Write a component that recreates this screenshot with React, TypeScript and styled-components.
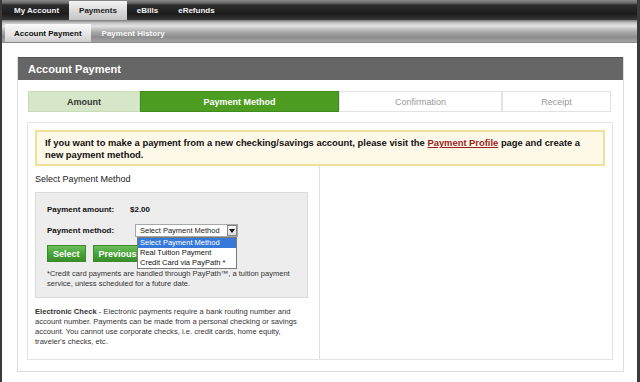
import styled, { createGlobalStyle } from "styled-components";

const GlobalStyle = createGlobalStyle`
  body {
    margin: 0;
    background: #fff;
    font-family: "Liberation Sans", Arial, sans-serif;
  }
`;

const Frame = styled.div`
  width: 640px;
  height: 382px;
  box-sizing: border-box;
  border-left: 2px solid #3a3a3a;
  border-right: 3px solid #3a3a3a;
  overflow: hidden;
  background: #fff;
`;

const TopNav = styled.nav`
  height: 20px;
  display: flex;
  align-items: flex-end;
  padding-left: 2px;
  background: linear-gradient(#8a8a8a 0, #6a6a6a 3px, #2c2c2c 5px, #1c1c1c 14px, #3a3a3a 20px);
`;

const NavTab = styled.div<{ active?: boolean }>`
  height: 19px;
  display: flex;
  align-items: center;
  padding: 0 10px;
  font-size: 8px;
  font-weight: bold;
  color: ${(p) => (p.active ? "#1a1a1a" : "#f2f2f2")};
  background: ${(p) =>
    p.active ? "linear-gradient(#f4f4f4, #d6d6d6 60%, #c4c4c4)" : "transparent"};
`;

const SubNav = styled.nav`
  height: 22px;
  display: flex;
  align-items: flex-end;
  padding-left: 3px;
  background: linear-gradient(#7a7a7a 0, #c6c6c6 3px, #e2e2e2 6px, #a8a8a8 12px, #8c8c8c 17px, #a4a4a4 22px);
  border-bottom: 1px solid #8a8a8a;
`;

const SubTab = styled.div<{ active?: boolean }>`
  height: 18px;
  display: flex;
  align-items: center;
  padding: 0 ${(p) => (p.active ? "9px" : "11px")};
  font-size: 8px;
  font-weight: bold;
  color: ${(p) => (p.active ? "#111" : "#f6f6f6")};
  background: ${(p) =>
    p.active ? "linear-gradient(#fafafa, #e4e4e4 60%, #cfcfcf)" : "transparent"};
`;

const Content = styled.main`
  padding: 14px 13px 0 15px;
`;

const Panel = styled.section`
  border: 1px solid #dcdcdc;
  border-top: none;
  height: 315px;
  box-sizing: border-box;
`;

const PanelHeader = styled.h1`
  margin: 0;
  height: 22px;
  display: flex;
  align-items: center;
  padding-left: 10px;
  background: #666;
  border-top: 1px solid #555;
  color: #fff;
  font-size: 11px;
  font-weight: bold;
`;

const Steps = styled.div`
  display: grid;
  grid-template-columns: 112px 199px 163px 109px;
  margin: 11px 0 0 10px;
  height: 21px;
`;

const Step = styled.div<{ state: "done" | "active" | "todo" }>`
  display: flex;
  align-items: center;
  justify-content: center;
  font-size: 9px;
  box-sizing: border-box;
  font-weight: ${(p) => (p.state === "todo" ? "normal" : "bold")};
  color: ${(p) => (p.state === "active" ? "#fff" : p.state === "done" ? "#333" : "#999")};
  background: ${(p) =>
    p.state === "active" ? "#4c9d22" : p.state === "done" ? "#d6e7c9" : "#fff"};
  border: 1px solid
    ${(p) => (p.state === "active" ? "#3f8c1a" : p.state === "done" ? "#c8dcb8" : "#e2e2e2")};
`;

const InnerBox = styled.div`
  margin: 10px 10px 0 9px;
  border: 1px solid #e4e4e4;
  height: 238px;
  box-sizing: border-box;
  padding: 7px 7px 0 7px;
`;

const Warning = styled.div`
  background: #fdf8e8;
  border: 2px solid #f1e09a;
  padding: 5px 8px;
  font-size: 9.4px;
  font-weight: bold;
  line-height: 12px;
  color: #111;
  height: 36px;
  box-sizing: border-box;
`;

const ProfileLink = styled.a`
  color: #9b1c1c;
  text-decoration: underline;
`;

const Columns = styled.div`
  display: grid;
  grid-template-columns: 285px 1fr;
`;

const LeftCol = styled.div`
  padding-top: 8px;
  border-right: 1px solid #dedede;
  height: 185px;
`;

const SectionLabel = styled.div`
  font-size: 9px;
  color: #222;
  height: 12px;
`;

const MethodBox = styled.div`
  margin-top: 6px;
  width: 273px;
  height: 106px;
  box-sizing: border-box;
  background: #ededed;
  border: 1px solid #dadada;
  padding: 10px 11px 0 11px;
  position: relative;
`;

const FieldRow = styled.div`
  display: grid;
  grid-template-columns: 88px 1fr;
  align-items: center;
  height: 13px;
  margin-bottom: 8px;
  font-size: 8px;
  color: #111;
`;

const FieldLabel = styled.span`
  font-weight: bold;
`;

const Value = styled.span`
  font-weight: bold;
  margin-left: -5px;
`;

const SelectWrap = styled.div`
  position: relative;
  width: 103px;
  height: 13px;
`;

const SelectBox = styled.div`
  height: 13px;
  box-sizing: border-box;
  border: 1px solid #a8a8a8;
  background: #fff;
  display: flex;
  align-items: center;
  padding-left: 4px;
  font-size: 7.5px;
  color: #222;
`;

const SelectArrow = styled.div`
  position: absolute;
  right: 1px;
  top: 1px;
  width: 10px;
  height: 11px;
  box-sizing: border-box;
  border: 1px solid #888;
  background: linear-gradient(#fafafa, #dcdcdc);
  display: flex;
  align-items: center;
  justify-content: center;
`;

const OptionList = styled.ul`
  position: absolute;
  left: 2px;
  top: 13px;
  width: 100px;
  margin: 0;
  padding: 0;
  list-style: none;
  background: #fff;
  border: 1px solid #7a7a7a;
  box-sizing: border-box;
  z-index: 2;
`;

const Option = styled.li<{ selected?: boolean }>`
  height: 10px;
  line-height: 10px;
  padding-left: 2px;
  font-size: 7.5px;
  white-space: nowrap;
  color: ${(p) => (p.selected ? "#fff" : "#111")};
  background: ${(p) => (p.selected ? "#3679d8" : "#fff")};
`;

const Buttons = styled.div`
  display: flex;
  gap: 7px;
`;

const GreenButton = styled.button`
  height: 17px;
  padding: 0 5px;
  border: 1px solid #3c8a2a;
  background: linear-gradient(#6cc05a, #45a136 55%, #3a8f2b);
  color: #fff;
  font-family: inherit;
  font-size: 9px;
  font-weight: bold;
  white-space: nowrap;
`;

const Footnote = styled.p`
  margin: 7px 0 0;
  font-size: 7.5px;
  line-height: 10px;
  color: #333;
`;

const Info = styled.p`
  margin: 9px 0 0;
  width: 264px;
  font-size: 7.6px;
  line-height: 10px;
  color: #333;
`;

export default function App() {
  return (
    <Frame>
      <GlobalStyle />
      <TopNav>
        <NavTab>My Account</NavTab>
        <NavTab active>Payments</NavTab>
        <NavTab>eBills</NavTab>
        <NavTab>eRefunds</NavTab>
      </TopNav>
      <SubNav>
        <SubTab active>Account Payment</SubTab>
        <SubTab>Payment History</SubTab>
      </SubNav>
      <Content>
        <Panel>
          <PanelHeader>Account Payment</PanelHeader>
          <Steps>
            <Step state="done">Amount</Step>
            <Step state="active">Payment Method</Step>
            <Step state="todo">Confirmation</Step>
            <Step state="todo">Receipt</Step>
          </Steps>
          <InnerBox>
            <Warning>
              If you want to make a payment from a new checking/savings account, please visit the{" "}
              <ProfileLink>Payment Profile</ProfileLink> page and create a new payment method.
            </Warning>
            <Columns>
              <LeftCol>
                <SectionLabel>Select Payment Method</SectionLabel>
                <MethodBox>
                  <FieldRow>
                    <FieldLabel>Payment amount:</FieldLabel>
                    <Value>$2.00</Value>
                  </FieldRow>
                  <FieldRow>
                    <FieldLabel>Payment method:</FieldLabel>
                    <SelectWrap>
                      <SelectBox>Select Payment Method</SelectBox>
                      <SelectArrow>
                        <svg width="6" height="4" viewBox="0 0 6 4">
                          <path d="M0 0h6L3 4z" fill="#111" />
                        </svg>
                      </SelectArrow>
                      <OptionList>
                        <Option selected>Select Payment Method</Option>
                        <Option>Real Tuition Payment</Option>
                        <Option>Credit Card via PayPath *</Option>
                      </OptionList>
                    </SelectWrap>
                  </FieldRow>
                  <Buttons>
                    <GreenButton>Select</GreenButton>
                    <GreenButton>Previous Step</GreenButton>
                  </Buttons>
                  <Footnote>
                    *Credit card payments are handled through PayPath™, a tuition payment
                    service, unless scheduled for a future date.
                  </Footnote>
                </MethodBox>
                <Info>
                  <b>Electronic Check</b> - Electronic payments require a bank routing number and
                  account number. Payments can be made from a personal checking or savings
                  account. You cannot use corporate checks, i.e. credit cards, home equity,
                  traveler's checks, etc.
                </Info>
              </LeftCol>
              <div />
            </Columns>
          </InnerBox>
        </Panel>
      </Content>
    </Frame>
  );
}
